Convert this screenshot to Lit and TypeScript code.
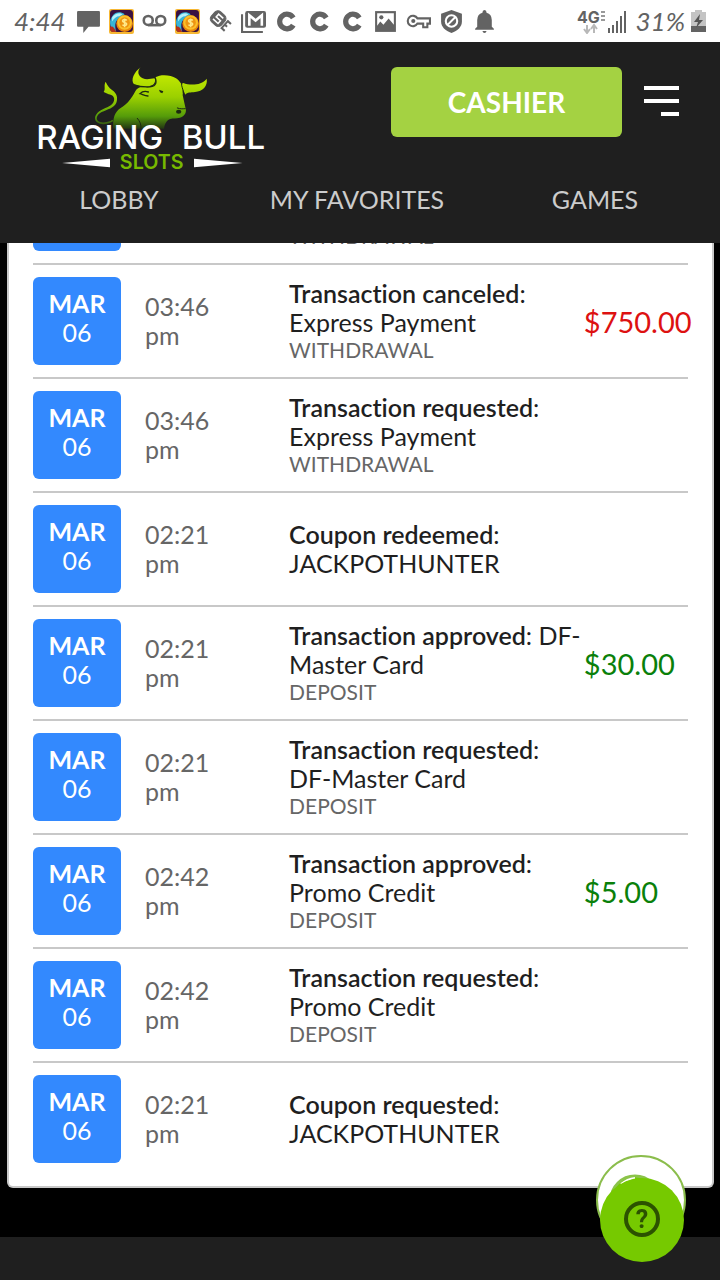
import { LitElement, html, css, svg, nothing } from "lit";
import { customElement, property } from "lit/decorators.js";

interface Transaction {
  time: string;
  title: string;
  detail: string;
  kind?: string;
  amount?: string;
  status?: "canceled" | "approved";
}

const transactions: Transaction[] = [
  { time: "03:46 pm", title: "Transaction requested", detail: "Express Payment", kind: "WITHDRAWAL" },
  { time: "03:46 pm", title: "Transaction canceled", detail: "Express Payment", kind: "WITHDRAWAL", amount: "$750.00", status: "canceled" },
  { time: "03:46 pm", title: "Transaction requested", detail: "Express Payment", kind: "WITHDRAWAL" },
  { time: "02:21 pm", title: "Coupon redeemed", detail: "JACKPOTHUNTER" },
  { time: "02:21 pm", title: "Transaction approved", detail: "DF-Master Card", kind: "DEPOSIT", amount: "$30.00", status: "approved" },
  { time: "02:21 pm", title: "Transaction requested", detail: "DF-Master Card", kind: "DEPOSIT" },
  { time: "02:42 pm", title: "Transaction approved", detail: "Promo Credit", kind: "DEPOSIT", amount: "$5.00", status: "approved" },
  { time: "02:42 pm", title: "Transaction requested", detail: "Promo Credit", kind: "DEPOSIT" },
  { time: "02:21 pm", title: "Coupon requested", detail: "JACKPOTHUNTER" },
];

const coin = svg`
  <rect width="24" height="24" rx="2" fill="#f6b733" />
  <rect x="1" y="1" width="22" height="21" rx="3" fill="#3a1142" />
  <path d="M1 12C3 4 9 1 15 5l-4 4c-5 1-6 6-4 13-4-1-6-4-6-10z" fill="#35b5d8" />
  <path d="M3 8c3-4 7-5 10-3l-3 2c-3 0-5 2-7 5z" fill="#b8f0fa" />
  <path d="M1 17c3-1 4 1 6 5H3l-2-2z" fill="#b3321d" />
  <circle cx="15" cy="14" r="8" fill="#e8860c" />
  <circle cx="15" cy="13" r="7" fill="#fcc02a" />
  <circle cx="15" cy="13" r="5" fill="#ee9512" />
  <path d="M17 11c-1-1.500-4-1-4 .5s4 1.500 4 3-3 2-4 .5M15 9v8.500" fill="none" stroke="#ffe98a" stroke-width="1.500" />`;

const letterC = svg`<path d="M18.500 8.500A7 7 0 1 0 18.500 15.500" fill="none" stroke="currentColor" stroke-width="5" />`;

const notifications = [
  svg`<path d="M2 2h20q1 0 1 1v13q0 1-1 1H12l-5 6v-6H2q-1 0-1-1V3q0-1 1-1z" fill="currentColor" />`,
  coin,
  svg`<g fill="none" stroke="currentColor" stroke-width="2.500"><circle cx="6" cy="11" r="4.300" /><circle cx="18" cy="11" r="4.300" /><path d="M6 15.500h12" /></g>`,
  coin,
  svg`<g transform="rotate(42 12 12)" fill="none" stroke="currentColor"><rect x="2" y="5" width="13" height="13" rx="4" fill="currentColor" /><path d="M12 8H6v3.500h5.500V15H5" stroke="#fff" stroke-width="1.500" /><path d="M17 6v11M17 7h4M17 11.500h3M17 16h4" stroke-width="2" /></g>`,
  svg`<path d="M1 5v17h20" fill="none" stroke="currentColor" stroke-width="2" /><rect x="4" y="2" width="20" height="16" rx="2" fill="currentColor" /><path d="M8 16V6l6 5 6-5v10" fill="none" stroke="#fff" stroke-width="2.500" />`,
  letterC,
  letterC,
  letterC,
  svg`<path d="M2 2h20v20H2z" fill="currentColor" /><path d="M4 4h16v11l-5-6-5 6-3-3-3 4z" fill="#fff" /><circle cx="8" cy="8" r="2" fill="currentColor" />`,
  svg`<path d="M11 9h12v5h-2.500v3.500h-4V14H11a5 5 0 1 1 0-5z" fill="none" stroke="currentColor" stroke-width="2" /><circle cx="7" cy="11.500" r="2" fill="currentColor" />`,
  svg`<path d="M12 1l10 3.500V12c0 5-4 9-10 11C6 21 2 17 2 12V4.500z" fill="currentColor" /><g fill="none" stroke="#fff" stroke-width="2"><circle cx="12" cy="11.500" r="5.500" /><path d="M8.500 15l7-7" /></g>`,
  svg`<path d="M12 1q2 0 2 2.500 5 1.500 5 7V17l2 2v1H3v-1l2-2v-6.500q0-5.500 5-7Q10 1 12 1zM10 21h4q-.5 2-2 2t-2-2z" fill="currentColor" />`,
];

@customElement("status-bar")
export class StatusBar extends LitElement {
  static styles = css`
    :host {
      display: flex;
      align-items: center;
      height: 42px;
      padding: 0 14px;
      box-sizing: border-box;
      background: #fff;
      color: #636363;
      font-family: Lato, sans-serif;
    }

    .clock,
    .battery-level {
      font-size: 26px;
      font-style: italic;
    }

    .clock {
      width: 58px;
    }

    .notifications {
      display: flex;
      flex: 1;
    }

    .notifications svg {
      width: 25px;
      height: 25px;
      margin: 0 4px;
    }

    .system {
      display: flex;
      align-items: center;
      gap: 6px;
    }
  `;

  render() {
    return html`
      <span class="clock">4:44</span>
      <div class="notifications">
        ${notifications.map((icon) => html`<svg viewBox="0 0 24 24" aria-hidden="true">${icon}</svg>`)}
      </div>
      <div class="system">
        <svg width="52" height="26" viewBox="0 0 52 26" aria-hidden="true">
          <text x="0" y="15" font-family="Inter, sans-serif" font-weight="700" font-size="16" fill="currentColor">4G</text>
          <path d="M24 4h4M24 8h4M24 12h4" stroke="#999" stroke-width="2" />
          <path d="M10 17v7m-3-3 3 4 3-4M17 25v-7m-3 3 3-4 3 4" fill="none" stroke="#b8b8b8" stroke-width="2" />
          <path d="M32 20v5M36 17v8M40 13v12M44 8v17M48 3v22" stroke="currentColor" stroke-width="2" />
        </svg>
        <span class="battery-level">31%</span>
        <svg width="15" height="22" viewBox="0 0 15 22" aria-hidden="true">
          <path d="M4 0h7v2h4v20H0V2h4z" fill="#c4c4c4" />
          <path d="M0 16h15v6H0z" fill="#636363" />
          <path d="M9 4 3 12h4l-2 6 7-8H8z" fill="#555" />
        </svg>
      </div>
    `;
  }
}

@customElement("site-header")
export class SiteHeader extends LitElement {
  static styles = css`
    :host {
      display: block;
      background: #1f1f1f;
      font-family: Lato, sans-serif;
    }

    .top {
      display: flex;
      align-items: flex-start;
      height: 142px;
      padding: 24px 41px 0 37px;
      box-sizing: border-box;
    }

    .logo {
      flex: 1;
    }

    .logo svg {
      display: block;
    }

    .cashier {
      width: 231px;
      height: 70px;
      margin: 1px 22px 0 0;
      border: 0;
      border-radius: 6px;
      background: #a4d242;
      color: #fff;
      font: 700 28px Lato, sans-serif;
    }

    .menu {
      margin-top: 20px;
      padding: 0;
      border: 0;
      background: none;
    }

    .menu svg {
      display: block;
    }

    nav {
      display: grid;
      grid-template-columns: repeat(3, 1fr);
      height: 59px;
      padding-right: 6px;
    }

    nav a {
      color: #ccc;
      font-size: 25px;
      line-height: 30px;
      text-align: center;
      text-decoration: none;
    }
  `;

  render() {
    return html`
      <div class="top">
        <a class="logo" href="#" aria-label="Raging Bull Slots">
          <svg width="229" height="106" viewBox="51 48 687 318">
            <defs>
              <linearGradient id="hide" gradientUnits="userSpaceOnUse" x1="0" y1="75" x2="0" y2="240">
                <stop offset="0" stop-color="#c1e800" />
                <stop offset="0.4" stop-color="#9bd000" />
                <stop offset="0.75" stop-color="#559c0a" />
                <stop offset="1" stop-color="#1f2c14" />
              </linearGradient>
            </defs>
            <g fill="url(#hide)">
              <path d="M280 236C278 204 284 186 302 174 322 163 334 146 346 124 356 108 372 108 392 110 406 108 410 98 406 82 424 72 452 75 468 85 480 93 488 106 489 120L488 136 496 172C501 184 496 199 480 203 468 206 460 204 451 207 440 210 434 222 432 236z" />
              <path d="M362 52C351 62 353 78 368 85 380 90 392 86 404 85 408 96 402 106 389 108 372 111 352 108 342 103 331 91 342 66 362 52z" />
              <path d="M560 86C564 108 548 124 525 126 512 128 502 126 496 134L487 113C482 108 484 99 490 99 508 106 544 108 560 86z" />
              <path d="M257 95C262 106 266 112 276 120 291 130 294 144 289 158 283 174 262 178 245 186 228 195 225 211 240 216 251 219 266 216 278 209L279 214C263 224 242 226 231 217 219 206 226 190 244 180 260 171 278 168 282 152 285 142 277 134 266 133L251 126C258 116 250 108 257 95z" />
            </g>
            <g fill="none" stroke="#1c2a10" stroke-width="4" stroke-linecap="round">
              <path d="M342 105C364 112 398 114 405 104 410 98 408 90 406 84" />
              <path d="M385 126C376 123 366 125 360 131 366 132 374 138 384 138" />
              <path d="M485 101C483 108 489 114 490 128" stroke-width="3" />
              <path d="M352 205C360 214 364 224 363 236M472 174C482 178 490 176 496 176" stroke-width="3" />
            </g>
            <path d="M417 119l13 5-3 6-7-3z" fill="#1c2a10" />
            <ellipse cx="476" cy="185" rx="8" ry="6" fill="#1c2a10" />
            <g font-family="Inter, sans-serif" font-weight="500" font-size="99" fill="#fff">
              <text x="49" y="297">RAGING</text>
              <text x="485" y="297">BULL</text>
            </g>
            <text x="395" y="357" text-anchor="middle" font-family="Inter, sans-serif" font-size="59" font-weight="600" fill="#77b900">SLOTS</text>
            <path d="M126 339l144-13v26zM668 339l-146-13v26z" fill="#fff" />
          </svg>
        </a>
        <button class="cashier" type="button">CASHIER</button>
        <button class="menu" type="button" aria-label="Menu">
          <svg width="35" height="30" viewBox="0 0 35 30">
            <path d="M0 2h35M0 15h35M17 28h18" stroke="#fff" stroke-width="4" />
          </svg>
        </button>
      </div>
      <nav>
        <a href="#lobby">LOBBY</a>
        <a href="#favorites">MY FAVORITES</a>
        <a href="#games">GAMES</a>
      </nav>
    `;
  }
}

@customElement("transaction-table")
export class TransactionTable extends LitElement {
  static styles = css`
    :host {
      display: block;
      padding: 0 24px 9px;
      border: 2px solid #c8c8c8;
      border-top: 0;
      border-radius: 0 0 6px 6px;
      background: #fff;
      color: #1f1f1f;
      font-family: Lato, sans-serif;
      font-size: 25px;
      font-variant-ligatures: none;
      line-height: 29px;
    }

    table {
      width: 100%;
      table-layout: fixed;
      border-spacing: 0;
    }

    td {
      padding: 12px 0;
      border-bottom: 2px solid #c8c8c8;
      vertical-align: middle;
    }

    tr:last-child td {
      border-bottom-color: transparent;
    }

    .date-col {
      width: 112px;
    }

    .time-col {
      width: 22%;
    }

    .text-col {
      width: 45%;
    }

    .date {
      display: flex;
      flex-direction: column;
      justify-content: center;
      width: 88px;
      height: 88px;
      padding-bottom: 6px;
      box-sizing: border-box;
      border-radius: 6px;
      background: #3389fe;
      color: #fff;
      text-align: center;
    }

    td.time {
      padding-right: 72px;
      color: #666;
    }

    .title {
      font-weight: 600;
    }

    .kind {
      color: #666;
      font-size: 21px;
      line-height: 26px;
    }

    .amount {
      font-size: 29px;
      white-space: nowrap;
    }

    .canceled {
      color: #dd1111;
    }

    .approved {
      color: #0a800a;
    }
  `;

  @property({ attribute: false }) rows: Transaction[] = [];

  render() {
    return html`
      <table aria-label="Transactions">
        <colgroup>
          <col class="date-col" />
          <col class="time-col" />
          <col class="text-col" />
          <col />
        </colgroup>
        <tbody>
          ${this.rows.map(
            (row) => html`
              <tr>
                <td><div class="date"><b>MAR</b><span>06</span></div></td>
                <td class="time">${row.time}</td>
                <td>
                  <span class="title">${row.title}</span>: ${row.detail}
                  ${row.kind ? html`<div class="kind">${row.kind}</div>` : nothing}
                </td>
                <td class="amount ${row.status ?? ""}">${row.amount ?? nothing}</td>
              </tr>
            `
          )}
        </tbody>
      </table>
    `;
  }
}

@customElement("app-root")
export class AppRoot extends LitElement {
  static styles = css`
    :host {
      display: flex;
      flex-direction: column;
      min-height: 100vh;
      overflow: hidden;
      background: #000;
    }

    status-bar,
    site-header {
      z-index: 1;
    }

    /* the list is scrolled part of a row under the header */
    main {
      margin: -92px 6px 49px 7px;
    }

    footer {
      flex: 1;
      background: #1f1f1f;
    }

    .help {
      position: fixed;
      right: 33px;
      bottom: 18px;
      padding: 0;
      border: 0;
      background: none;
    }

    .help svg {
      display: block;
    }
  `;

  render() {
    return html`
      <status-bar></status-bar>
      <site-header></site-header>
      <main>
        <transaction-table .rows=${transactions}></transaction-table>
      </main>
      <footer></footer>
      <button class="help" type="button" aria-label="Help">
        <svg width="92" height="108" viewBox="0 0 92 108">
          <circle cx="46" cy="46" r="44" fill="#fff" stroke="#8bbd4c" stroke-width="2" />
          <circle cx="40" cy="46" r="24" fill="#76c900" stroke="#8bc34a" stroke-width="3" />
          <path d="M26 30q6-5 14-6" fill="none" stroke="#fff" stroke-width="2" />
          <circle cx="47" cy="66" r="42" fill="#76c900" />
          <circle cx="47" cy="65" r="16" fill="none" stroke="#2c5200" stroke-width="4" />
          <text x="47" y="74" text-anchor="middle" font-family="Roboto, sans-serif" font-weight="700" font-size="25" fill="#2c5200">?</text>
        </svg>
      </button>
    `;
  }
}
